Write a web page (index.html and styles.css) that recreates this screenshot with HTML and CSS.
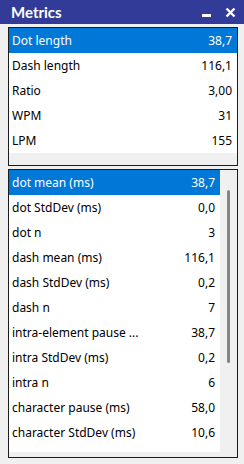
FILE: index.html
```html
<!DOCTYPE html>
<html lang="en">
<head>
    <meta charset="UTF-8">
    <title>Metrics</title>
    <link rel="stylesheet" href="styles.css">
</head>
<body>
    <div class="window">
        <header class="titlebar">
            <span class="title">Metrics</span>
            <div class="controls">
                <svg class="ctl" width="11" height="11" viewBox="0 0 11 11">
                    <rect x="1" y="7" width="9" height="3" fill="#fff"/>
                </svg>
                <svg class="ctl" width="11" height="11" viewBox="0 0 11 11">
                    <path d="M1.5 1.5 L9.5 9.5 M9.5 1.5 L1.5 9.5" stroke="#fff" stroke-width="2.4" fill="none"/>
                </svg>
            </div>
        </header>

        <main class="content">
            <div class="panel summary">
                <ul class="list">
                    <li class="row selected"><span>Dot length</span><span>38,7</span></li>
                    <li class="row"><span>Dash length</span><span>116,1</span></li>
                    <li class="row"><span>Ratio</span><span>3,00</span></li>
                    <li class="row"><span>WPM</span><span>31</span></li>
                    <li class="row"><span>LPM</span><span>155</span></li>
                </ul>
            </div>

            <div class="panel details">
                <div class="list-view">
                    <ul class="list">
                        <li class="row selected"><span>dot mean (ms)</span><span>38,7</span></li>
                        <li class="row"><span>dot StdDev (ms)</span><span>0,0</span></li>
                        <li class="row"><span>dot n</span><span>3</span></li>
                        <li class="row"><span>dash mean (ms)</span><span>116,1</span></li>
                        <li class="row"><span>dash StdDev (ms)</span><span>0,2</span></li>
                        <li class="row"><span>dash n</span><span>7</span></li>
                        <li class="row"><span>intra-element pause ...</span><span>38,7</span></li>
                        <li class="row"><span>intra StdDev (ms)</span><span>0,2</span></li>
                        <li class="row"><span>intra n</span><span>6</span></li>
                        <li class="row"><span>character pause (ms)</span><span>58,0</span></li>
                        <li class="row"><span>character StdDev (ms)</span><span>10,6</span></li>
                    </ul>
                    <div class="scrollbar"><div class="thumb"></div></div>
                </div>
            </div>
        </main>
    </div>
</body>
</html>
```

FILE: styles.css
```css
:root {
    --titlebar: #323b98;
    --select: #0078d7;
    --face: #f0f0f0;
    --border: #1c1c1c;
    --text: #000000;
}

* {
    margin: 0;
    padding: 0;
    box-sizing: border-box;
}

body {
    font-family: 'Noto Sans', 'DejaVu Sans', sans-serif;
    background: var(--face);
    color: var(--text);
    width: 244px;
    height: 464px;
    overflow: hidden;
}

/* Title bar */
.titlebar {
    height: 24px;
    background: var(--titlebar);
    display: flex;
    align-items: center;
    justify-content: space-between;
    padding: 0 8px 0 11px;
}

.title {
    color: #fff;
    font-family: Lato, 'Noto Sans', sans-serif;
    font-size: 15px;
    font-weight: 700;
    line-height: 24px;
}

.controls {
    display: flex;
    gap: 13px;
    align-items: center;
}

.ctl {
    display: block;
}

/* Panels */
.content {
    padding: 3px 6px 0 8px;
    display: flex;
    flex-direction: column;
    gap: 3px;
}

.panel {
    border: 1px solid var(--border);
    background: var(--face);
}

.summary {
    height: 139px;
}

.details {
    height: 289px;
}

.list {
    list-style: none;
    background: #fff;
}

.row {
    height: 25px;
    display: flex;
    align-items: center;
    justify-content: space-between;
    padding: 0 5px 0 3px;
    font-size: 12px;
    white-space: nowrap;
}

.row.selected {
    background: var(--select);
    color: #fff;
}

.list-view {
    display: flex;
    height: 282px;
    background: #fff;
}

.list-view .list {
    flex: 1;
}

.scrollbar {
    width: 17px;
    background: var(--face);
    padding: 20px 0 0 7px;
}

.thumb {
    width: 3px;
    height: 173px;
    background: #858585;
    border-radius: 2px;
}
```
